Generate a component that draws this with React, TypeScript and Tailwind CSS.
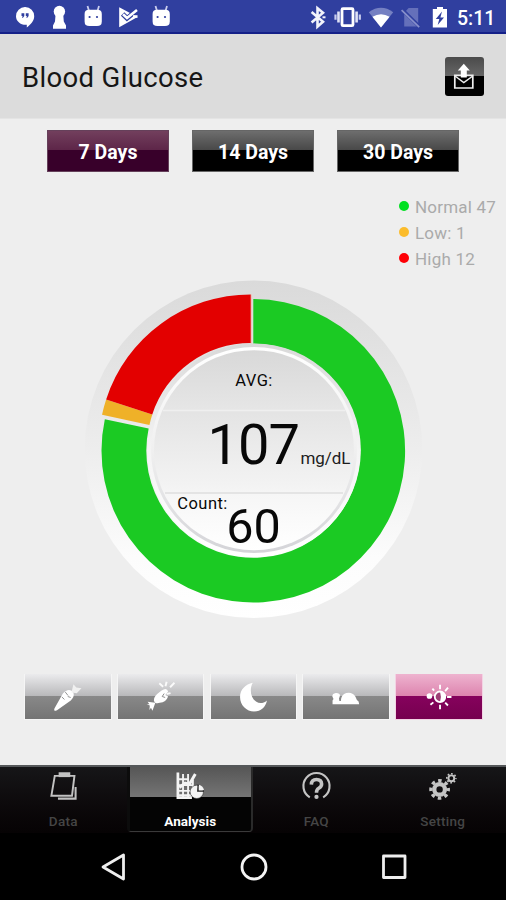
import React, { useState } from 'react';
import clsx from 'clsx';

interface Slice {
  label: string;
  dot: string;
}

const PERIODS = ['7 Days', '14 Days', '30 Days'];

const LEGEND: Slice[] = [
  { label: 'Normal 47', dot: 'bg-[#00e020]' },
  { label: 'Low: 1', dot: 'bg-[#fbbc2c]' },
  { label: 'High 12', dot: 'bg-[#fe0006]' },
];

// Path of a ring segment, angles in degrees clockwise from the top
const ringPath = (cx: number, cy: number, outer: number, inner: number, from: number, to: number) => {
  const point = (r: number, deg: number) => {
    const a = (deg * Math.PI) / 180;
    return `${(cx + r * Math.sin(a)).toFixed(2)} ${(cy - r * Math.cos(a)).toFixed(2)}`;
  };
  const large = to - from > 180 ? 1 : 0;
  return `M${point(outer, from)}A${outer} ${outer} 0 ${large} 1 ${point(outer, to)}L${point(inner, to)}A${inner} ${inner} 0 ${large} 0 ${point(inner, from)}Z`;
};

const AndroidHead: React.FC = () => (
  <svg className="w-[34px] h-8" viewBox="0 0 34 32" fill="white">
    <path d="M11.5 6l1.5 5M23 6l-1.5 5" stroke="#c9cdee" strokeWidth="1.8" />
    <path d="M8.6 14q0-4.2 4.4-4.2h8.400q4.400 0 4.400 4.200v7.500q0 4.600-4.800 4.600h-7.600q-4.800 0-4.800-4.600z" />
    <circle cx="13.6" cy="17" r="1.1" fill="#303f9f" />
    <circle cx="21" cy="17" r="1.1" fill="#303f9f" />
  </svg>
);

const StatusBar: React.FC = () => (
  <div className="h-[34px] bg-[#303f9f] border-b-2 border-[#142088] flex justify-between pl-2 pr-[11px]">
    <div className="flex">
      <svg className="w-[34px] h-8" viewBox="0 0 34 32" fill="white">
        <path d="M17.2 7a9 9 0 0 1 9 9.2c0 5-4 8.6-7.4 11.2v-2.7c-6 .5-10.8-3.3-10.8-8.5a9 9 0 0 1 9.2-9.2z" />
        <path d="M13.5 13.300h2.800v2.800l-1.300 1.700h-1l.6-1.800h-1.100zM17.800 13.300h2.800v2.800l-1.300 1.700h-1l.6-1.800h-1.100z" fill="#303f9f" />
      </svg>
      <svg className="w-[34px] h-8" viewBox="0 0 34 32" fill="white">
        <circle cx="17.4" cy="11.5" r="5.7" />
        <path d="M13.6 14h7.6l.6 7.500 2.200 4v3.200H11v-3.200l2-4z" />
      </svg>
      <AndroidHead />
      <svg className="w-[34px] h-8" viewBox="0 0 34 32" fill="white">
        <path d="M9.2 7.200L27.500 17 9.200 27.200z" />
        <path d="M12.600 14l4.400 4.300 10-8.200" fill="none" stroke="#303f9f" strokeWidth="4.8" />
        <path d="M13 14.200l4 3.800 10-8" fill="none" stroke="white" strokeWidth="2.6" />
        <path d="M23 16.500h4.500" stroke="white" strokeWidth="2.6" />
      </svg>
      <AndroidHead />
    </div>
    <div className="flex">
      <svg className="w-[31px] h-8" viewBox="0 0 31 32" fill="none" stroke="#f2f3fb" strokeWidth="2.6">
        <path d="M9.600 12l11.400 9.800-5.500 4.800V8.200l5.500 4.600L9.600 22.600" />
        <path d="M20.500 17.300h3" strokeWidth="2" />
      </svg>
      <svg className="w-[31px] h-8" viewBox="0 0 31 32" fill="none" stroke="white">
        <rect x="9" y="8.7" width="11" height="17" rx="1" strokeWidth="2.8" />
        <path d="M5.500 11.500v11M23.600 11.500v11" strokeWidth="2.6" stroke="#dfe2f5" />
        <path d="M2.500 14.500v5.200M26.800 14.500v5.200" strokeWidth="2.2" stroke="#c9cdee" />
      </svg>
      <svg className="w-[31px] h-8" viewBox="0 0 31 32">
        <path d="M17 27.500L4.800 12.300Q17 3.400 29.200 12.300z" fill="#7580c2" />
        <path d="M17 27.500l-8.600-10.800q8.600-5 17.200 0z" fill="white" />
      </svg>
      <svg className="w-[31px] h-8" viewBox="0 0 31 32">
        <path d="M13.600 8h9.600v18.500H9.200V13z" fill="#6570ba" />
        <path d="M6.800 9.200l18 17.800" stroke="#303f9f" strokeWidth="3.6" />
        <path d="M6.600 10.200l17.600 17" stroke="#8890cb" strokeWidth="1.7" />
      </svg>
      <svg className="w-[31px] h-8" viewBox="0 0 31 32">
        <path d="M11 7h6v2h4v18.500H6.800V9H11z" fill="white" />
        <path d="M16 11.500L9.800 19h3.500l-1.600 6 6.300-7.600h-3.600z" fill="#303f9f" />
      </svg>
      <span className="text-[19.5px] leading-[37px] h-8 font-medium text-white w-[38px] whitespace-nowrap">5:11</span>
    </div>
  </div>
);

const Header: React.FC = () => (
  <header className="h-[85px] bg-[#dcdcdc] border-b border-[#e4e4e4] flex items-center justify-between px-[22px]">
    <h1 className="pt-[3px] text-[27.5px] leading-8 text-[#161616] tracking-[0.35px] whitespace-nowrap">Blood Glucose</h1>
    <button className="w-[39px] h-[39px] rounded-[3px] bg-linear-to-b from-[#4b4b4b] from-0% via-[#666] via-48% to-black to-48% flex items-center justify-center">
      <svg className="w-[39px] h-[39px]" viewBox="0 0 39 39">
        <path d="M9.800 18.400h18v12.600h-18z" fill="none" stroke="#eee" strokeWidth="1.7" />
        <path d="M10 19l8.800 6.600 9-6.600" fill="none" stroke="#eee" strokeWidth="1.5" />
        <path d="M18.800 6.800l6 6.800h-3v6.800h-6v-6.800h-3z" fill="white" />
      </svg>
    </button>
  </header>
);

const GlucoseChart: React.FC = () => (
  <svg className="w-[342px] h-[342px]" viewBox="82 278 342 342" fontFamily="Roboto, sans-serif">
    <defs>
      <linearGradient id="plate" x1="0" y1="0" x2="0" y2="1">
        <stop offset="0" stopColor="#dadada" />
        <stop offset="0.5" stopColor="#ededed" />
        <stop offset="0.82" stopColor="#fcfcfc" />
        <stop offset="1" stopColor="#fff" />
      </linearGradient>
      <linearGradient id="rim" x1="0" y1="0" x2="0" y2="1">
        <stop offset="0" stopColor="#fff" />
        <stop offset="0.5" stopColor="#f0f0f0" />
        <stop offset="1" stopColor="#d4d4d8" />
      </linearGradient>
      <linearGradient id="rimEdge" x1="0" y1="0" x2="0" y2="1">
        <stop offset="0" stopColor="#d9d9d9" />
        <stop offset="0.5" stopColor="#f4f4f4" />
        <stop offset="1" stopColor="#fff" />
      </linearGradient>
      <linearGradient id="disc" x1="0" y1="0" x2="0" y2="1">
        <stop offset="0" stopColor="#d8d8d8" />
        <stop offset="0.3" stopColor="#e6e6e6" />
        <stop offset="0.31" stopColor="#e4e4e4" />
        <stop offset="0.68" stopColor="#f3f3f3" />
        <stop offset="0.72" stopColor="#f6f6f6" />
        <stop offset="1" stopColor="#fff" />
      </linearGradient>
    </defs>
    <circle cx="253.5" cy="449.3" r="168.8" fill="url(#plate)" />
    <path d={ringPath(253.3, 450.8, 151.8, 107, 0, 282)} fill="#1bca23" />
    <path d="M251 294.500v49" stroke="#f9b0a8" strokeWidth="1.2" />
    <path d={ringPath(250.7, 446.4, 152, 103.5, 282, 288)} fill="#efb128" />
    <path d={ringPath(250.7, 446.4, 152, 103.5, 288, 360)} fill="#e30000" />
    <circle cx="254" cy="450.2" r="106.8" fill="url(#rimEdge)" />
    <circle cx="254" cy="450" r="103" fill="url(#rim)" />
    <circle cx="254" cy="450.2" r="100" fill="url(#disc)" />
    <path d="M163 410.500h182" stroke="#efefef" strokeWidth="1.5" />
    <path d="M165 493h178" stroke="#dedede" strokeWidth="1.3" />
    <g fill="#080808">
      <text x="235.3" y="386" fontSize="16.5" textLength="37" lengthAdjust="spacing">AVG:</text>
      <text x="207.500" y="463.5" fontSize="56" textLength="92.500" lengthAdjust="spacing">107</text>
      <text x="300.5" y="464" fontSize="17" fill="#1c1c1c" textLength="50" lengthAdjust="spacing">mg/dL</text>
      <text x="177.3" y="509.3" fontSize="16.5" textLength="50" lengthAdjust="spacing">Count:</text>
      <text x="226.2" y="542.700" fontSize="48.5" textLength="54.500" lengthAdjust="spacing">60</text>
    </g>
  </svg>
);

// Glyphs of the meal filters, all on the 86x46 button face
const MEAL_ICONS: { id: string; glyph: React.ReactNode }[] = [
  {
    id: 'before-meal',
    glyph: (
      <>
        <path d="M45.500 16.500q3.200.6 3.600 4t-3 6.500L32 37q-4 2-2.600-1.800L38 20q4-4.500 7.500-3.500z" fill="white" />
        <path d="M46.800 19l2-8.500 3 3.300 5.200.8-4.800 5z" fill="#f0f0f0" />
        <path d="M40.500 18.500l2.800 3.500M37 23.500l2.600 2.500M46 24l-3-1" stroke="#8f8f8f" strokeWidth="1" />
      </>
    ),
  },
  {
    id: 'after-meal',
    glyph: (
      <>
        <path d="M43.500 17q6-4 7 1l-2.800 3.500 2.800 1.500q-2 6-8.500 6.500-5 1.500-6-2.500t7.500-10z" fill="white" />
        <path d="M37.500 29.500l-3 8-1.500-3-1.600 2.400.4-4.600-3.200-1.500h2.800l-1.800-2.500z" fill="white" />
        <path d="M41.500 9.500l4 3.500M49 8l-1.200 4.500M57 9l-4.500 4.500M53 19.500l-4 1" stroke="#fafafa" strokeWidth="2" />
        <path d="M46.500 20l-2 3 3 1" stroke="#8a8a8a" fill="none" />
      </>
    ),
  },
  {
    id: 'bedtime',
    glyph: <path d="M42 9c-7.500 1.500-13 7-13 14.500C29 32 35.500 38.300 43.500 38.300c6.800 0 11.600-4.500 13-11.300-3.500 3-7.500 3.500-10.800 1.400C39.500 24.500 38.500 15 42 9z" fill="white" />,
  },
  {
    id: 'wake-up',
    glyph: <path d="M29.500 31v-4l1-1.500-1.200-2.500q0-3 3.500-3.500 4.300-.2 4.300 2.800l-1 2.700.4 2.500h1.500q.5-6.800 5.500-8 6-1.500 9.300 3.500l1.600 3.500q2.300 1 2.300 4.500z" fill="white" />,
  },
  {
    id: 'all-day',
    glyph: (
      <>
        <circle cx="44.3" cy="23.3" r="5.4" fill="#9d3f76" stroke="white" strokeWidth="1.9" />
        <path d="M44.300 17.800a5.500 5.500 0 0 1 0 11q1.800-5.500 0-11z" fill="white" />
        <circle cx="33.5" cy="22.5" r="2.9" fill="white" />
        <path d="M44.300 11v4.500M44.300 31.500V36M52.500 14l-3 3.500M49.600 29.300l2.800 2.900M51.500 23.500h4.500M36.500 15l1.800 2M37.500 29l-3 2.500" stroke="white" strokeWidth="1.9" />
      </>
    ),
  },
];

const DataIcon = () => (
  <svg className="w-9 h-8" viewBox="0 0 36 32" fill="none" stroke="#c2c2c2">
    <path d="M9.500 5h20.300l-2.500 20.500H6z" strokeWidth="2" />
    <path d="M31 16.500v12H12.800" strokeWidth="2.1" />
    <path d="M13.500 3.800h12" strokeWidth="5" />
  </svg>
);

const AnalysisIcon = () => (
  <svg className="w-9 h-8" viewBox="0 0 36 32" fill="none" stroke="#f4f4f4">
    <path d="M5.500 1.500v26h14.500" strokeWidth="2.8" />
    <path d="M10.800 3v24M16 3v24M21 9v16M5 8.500h12M5 14.500h16M5 20.500h14M5 25h14" strokeWidth="1.9" />
    <path d="M7 17l6-4.500 4.500 1L23.500 3" strokeWidth="3" />
    <circle cx="25" cy="21.5" r="6.9" fill="#f4f4f4" stroke="#333" strokeWidth=".6" />
    <path d="M25.300 21.500l.5-7.500 1.200.3v5.700h5.200l.3 1.300z" fill="#222" stroke="none" />
    <path d="M27.200 19.500v-5.200q4 1 5.300 5.200z" fill="#f4f4f4" stroke="none" />
  </svg>
);

const FaqIcon = () => (
  <svg className="w-9 h-8" viewBox="0 0 36 32" fill="none" stroke="#c4c4c4">
    <path d="M11.600 27.200A13.500 13.500 0 1 1 25.400 27.200" strokeWidth="2.2" />
    <path d="M13.200 14q.2-5.200 5.300-5.200t5.300 4.700q0 2.800-3 4.300-2.300 1.200-2.300 4.700" strokeWidth="3.7" />
    <circle cx="18.5" cy="26.8" r="2.2" fill="#c4c4c4" stroke="none" />
  </svg>
);

const SettingIcon = () => (
  <svg className="w-9 h-8" viewBox="0 0 36 32" fill="none" stroke="#c4c4c4">
    <circle cx="14.5" cy="19" r="5.5" strokeWidth="4.4" />
    <circle cx="14.5" cy="19" r="9" strokeWidth="3.4" strokeDasharray="3.6 3.469" strokeDashoffset="1.8" />
    <circle cx="26.6" cy="7.5" r="3" strokeWidth="2" />
    <circle cx="26.6" cy="7.5" r="4.7" strokeWidth="1.6" strokeDasharray="1.85 1.841" strokeDashoffset=".9" />
  </svg>
);

const TABS = [
  { name: 'Data', Icon: DataIcon },
  { name: 'Analysis', Icon: AnalysisIcon },
  { name: 'FAQ', Icon: FaqIcon },
  { name: 'Setting', Icon: SettingIcon },
];

const App: React.FC = () => {
  const [period, setPeriod] = useState('7 Days');
  const [meal, setMeal] = useState('all-day');
  const [tab, setTab] = useState('Analysis');

  return (
    <div className="w-[506px] h-[900px] bg-[#eee] flex flex-col overflow-hidden font-[Roboto,sans-serif]">
      <StatusBar />
      <Header />

      <main className="flex-1 flex flex-col">
        <div className="flex gap-[23px] pt-[11px] pl-[47px]">
          {PERIODS.map((p) => (
            <button
              key={p}
              onClick={() => setPeriod(p)}
              className={clsx(
                'w-[122px] h-[41.5px] border text-white font-bold text-[19.5px] leading-none pt-[3px] whitespace-nowrap bg-linear-to-b from-0% via-48% to-48%',
                period === p
                  ? 'border-[#65405a] from-[#723f5d] via-[#5d2548] to-[#38002a]'
                  : 'border-[#666] from-[#6e6e6e] via-[#484848] to-black'
              )}
            >
              {p}
            </button>
          ))}
        </div>

        <ul className="mt-[21.5px] pl-[399px]">
          {LEGEND.map((item) => (
            <li key={item.label} className="h-[26px] flex items-center text-[17px] text-[#aaa] tracking-[0.2px] whitespace-nowrap">
              <span className={clsx('w-[10px] h-[10px] rounded-full mr-[6px] shrink-0', item.dot)} />
              <span className="leading-none pt-[2px]">{item.label}</span>
            </li>
          ))}
        </ul>

        <div className="mt-[7px] pl-[82px]">
          <GlucoseChart />
        </div>

        <div className="mt-auto mb-[45px] flex gap-[5.3px] pl-6">
          {MEAL_ICONS.map(({ id, glyph }) => (
            <button
              key={id}
              onClick={() => setMeal(id)}
              className={clsx(
                'w-[87.5px] h-[46px] border border-t-0',
                meal === id
                  ? 'border-[#f3d3e4] bg-[linear-gradient(#eeb3cf,#dd85af_48%,#86025d_48%,#76004f)]'
                  : 'border-[#f5f5f5] bg-[linear-gradient(#ebebed,#b9b9bb_48%,#898989_48%,#747474)]'
              )}
            >
              <svg className="w-full h-full" viewBox="0 0 86 46">{glyph}</svg>
            </button>
          ))}
        </div>
      </main>

      <nav className="h-[68px] border-t-2 border-[#55585a] bg-linear-to-b from-[#161618] to-[#060304] flex">
        {TABS.map(({ name, Icon }) => (
          <button
            key={name}
            onClick={() => setTab(name)}
            className={clsx(
              'w-[126.5px] shrink-0 h-[65px] flex flex-col items-center pt-[4px] border-b',
              tab === name
                ? 'rounded-b-[4px] border-l-[3px] border-r-2 border-l-[#0c0c0c] border-r-[#2a2a2a] border-b-[#3a3a3a] bg-linear-to-b from-[#565656] from-0% via-[#757575] via-47% to-[#040404] to-47%'
                : 'border-transparent'
            )}
          >
            <Icon />
            <span className={clsx('mt-[9px] text-[13.5px] leading-5', tab === name ? 'tracking-[0.05px] font-bold text-white' : 'tracking-[0.25px] font-medium text-[#454545]')}>
              {name}
            </span>
          </button>
        ))}
      </nav>

      <div className="h-[67px] bg-black flex items-center justify-between pl-[99px] pr-[98px]">
        <svg className="w-7 h-7" viewBox="0 0 28 28" fill="none" stroke="#eee" strokeWidth="2.8" strokeLinejoin="round">
          <path d="M24.500 2v24L4 14z" />
        </svg>
        <svg className="w-7 h-7" viewBox="0 0 28 28" fill="none" stroke="#f4f4f4" strokeWidth="2.8">
          <circle cx="14" cy="14" r="12" />
        </svg>
        <svg className="w-7 h-7" viewBox="0 0 28 28" fill="none" stroke="#eee" strokeWidth="2.8" strokeLinejoin="round">
          <rect x="3.5" y="3" width="21.5" height="21.5" />
        </svg>
      </div>
    </div>
  );
};

export default App;
